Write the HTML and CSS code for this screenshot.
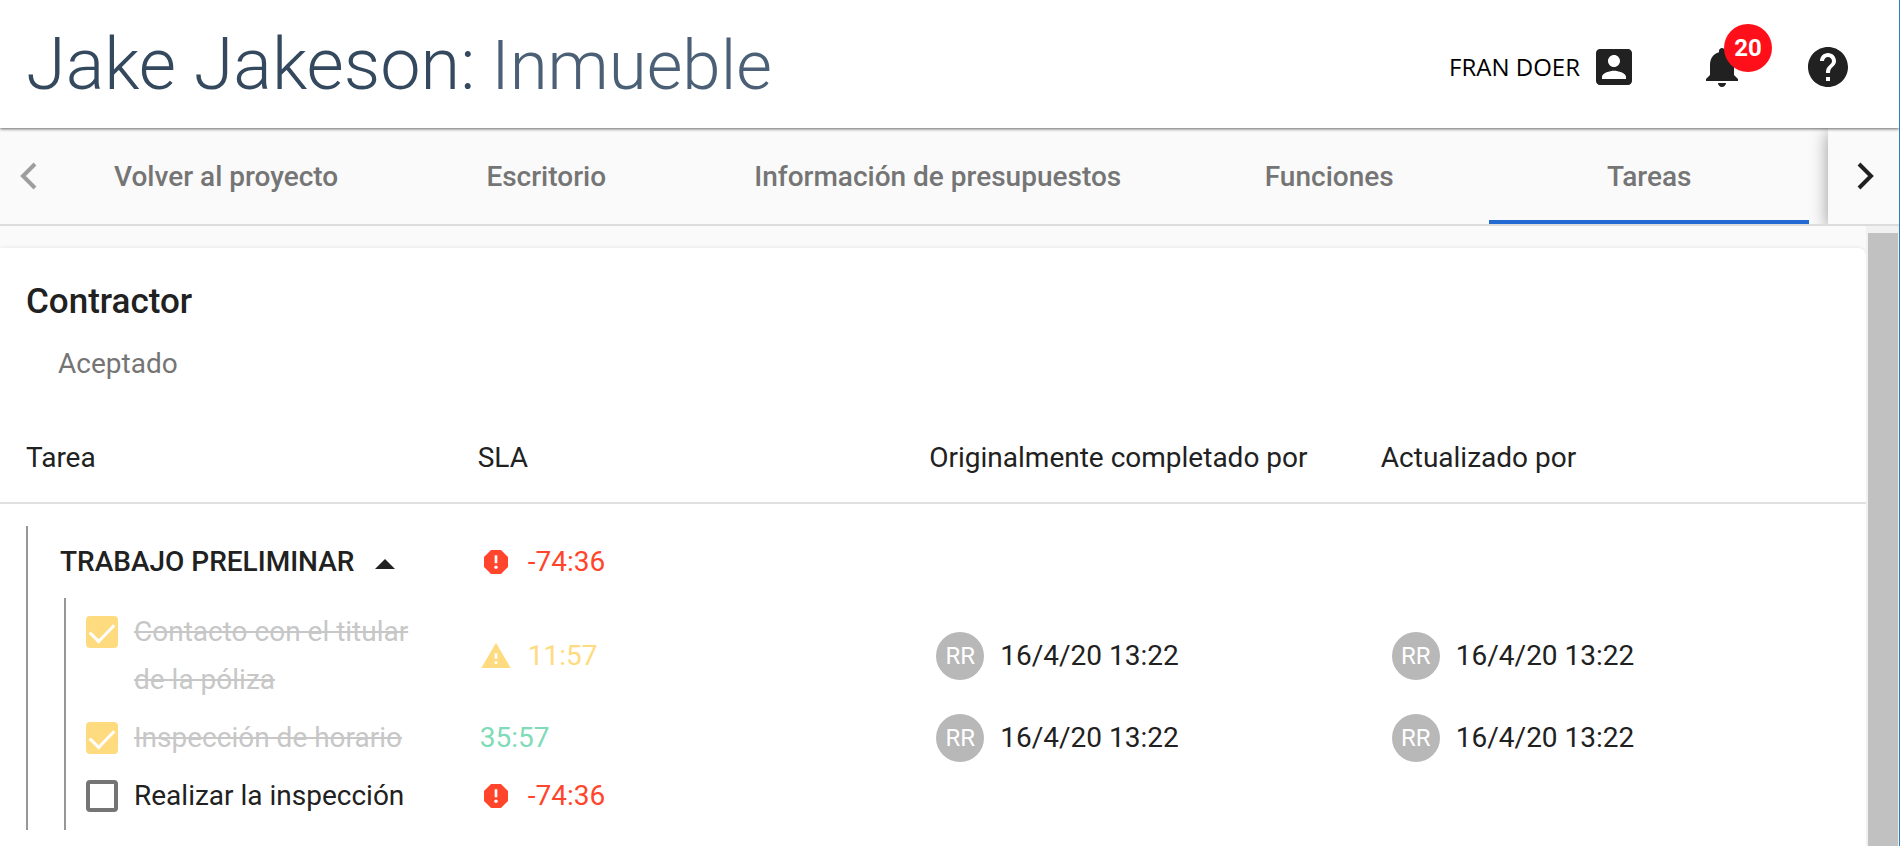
FILE: index.html
```
<!DOCTYPE html>
<html lang="es">
<head>
  <meta charset="UTF-8">
  <title>Jake Jakeson: Inmueble</title>
  <link rel="stylesheet" href="styles.css">
</head>
<body>
  <header class="top-bar">
    <h1>Jake Jakeson: <span>Inmueble</span></h1>
    <div class="top-actions">
      <button class="user-btn">
        FRAN DOER
        <svg class="icon-lg" viewBox="0 0 24 24"><path d="M3 5v14c0 1.1.89 2 2 2h14c1.1 0 2-.9 2-2V5c0-1.1-.9-2-2-2H5c-1.11 0-2 .9-2 2zm12 4c0 1.66-1.34 3-3 3s-3-1.34-3-3 1.34-3 3-3 3 1.34 3 3zm-9 8c0-2 4-3.1 6-3.1s6 1.1 6 3.1v1H6v-1z"/></svg>
      </button>
      <button class="bell-btn" aria-label="Notificaciones">
        <svg class="icon-lg" viewBox="0 0 24 24"><path d="M12 22c1.1 0 2-.9 2-2h-4c0 1.1.89 2 2 2zm6-6v-5c0-3.07-1.64-5.64-4.5-6.32V4c0-.83-.67-1.5-1.5-1.5s-1.5.67-1.5 1.5v.68C7.63 5.36 6 7.92 6 11v5l-2 2v1h16v-1l-2-2z"/></svg>
        <span class="badge">20</span>
      </button>
      <button aria-label="Ayuda">
        <svg class="icon-lg" viewBox="0 0 24 24"><path d="M12 2C6.48 2 2 6.48 2 12s4.48 10 10 10 10-4.48 10-10S17.52 2 12 2zm1 17h-2v-2h2v2zm2.07-7.75l-.9.92C13.45 12.9 13 13.5 13 15h-2v-.5c0-1.1.45-2.1 1.17-2.83l1.24-1.26c.37-.36.59-.86.59-1.41 0-1.1-.9-2-2-2s-2 .9-2 2H8c0-2.21 1.79-4 4-4s4 1.79 4 4c0 .88-.36 1.68-.93 2.25z"/></svg>
      </button>
    </div>
  </header>

  <nav class="tabs">
    <button class="tab-arrow prev" aria-label="Anterior">
      <svg viewBox="0 0 18 28"><path d="M16 2 4 14l12 12"/></svg>
    </button>
    <div class="tab-list">
      <a href="#">Volver al proyecto</a>
      <a href="#">Escritorio</a>
      <a href="#">Información de presupuestos</a>
      <a href="#">Funciones</a>
      <a href="#" class="active">Tareas</a>
    </div>
    <button class="tab-arrow next" aria-label="Siguiente">
      <svg viewBox="0 0 18 28"><path d="m2 2 12 12L2 26"/></svg>
    </button>
  </nav>

  <div class="content">
    <main class="card">
      <h2>Contractor</h2>
      <p class="status">Aceptado</p>
      <table>
        <thead>
          <tr>
            <th>Tarea</th>
            <th>SLA</th>
            <th>Originalmente completado por</th>
            <th>Actualizado por</th>
          </tr>
        </thead>
        <tbody>
          <tr class="group">
            <td><button class="group-btn">TRABAJO PRELIMINAR <i class="caret"></i></button></td>
            <td>
              <div class="sla late">
                <svg viewBox="0 0 24 24"><path d="M15.73 3H8.27L3 8.27v7.46L8.27 21h7.46L21 15.73V8.27L15.73 3zM12 17.3c-.72 0-1.3-.58-1.3-1.3s.58-1.3 1.3-1.3 1.3.58 1.3 1.3-.58 1.3-1.3 1.3zm1-4.3h-2V7h2v6z"/></svg>
                -74:36
              </div>
            </td>
            <td></td>
            <td></td>
          </tr>
          <tr class="task done">
            <td>
              <label><input type="checkbox" checked><span>Contacto con el titular de la póliza</span></label>
            </td>
            <td>
              <div class="sla warn">
                <svg viewBox="0 0 24 24"><path d="M1 21h22L12 2 1 21zm12-3h-2v-2h2v2zm0-4h-2v-4h2v4z"/></svg>
                11:57
              </div>
            </td>
            <td><div class="by"><span class="avatar">RR</span>16/4/20 13:22</div></td>
            <td><div class="by"><span class="avatar">RR</span>16/4/20 13:22</div></td>
          </tr>
          <tr class="task done">
            <td>
              <label><input type="checkbox" checked><span>Inspección de horario</span></label>
            </td>
            <td><div class="sla ok">35:57</div></td>
            <td><div class="by"><span class="avatar">RR</span>16/4/20 13:22</div></td>
            <td><div class="by"><span class="avatar">RR</span>16/4/20 13:22</div></td>
          </tr>
          <tr class="task">
            <td>
              <label><input type="checkbox"><span>Realizar la inspección</span></label>
            </td>
            <td>
              <div class="sla late">
                <svg viewBox="0 0 24 24"><path d="M15.73 3H8.27L3 8.27v7.46L8.27 21h7.46L21 15.73V8.27L15.73 3zM12 17.3c-.72 0-1.3-.58-1.3-1.3s.58-1.3 1.3-1.3 1.3.58 1.3 1.3-.58 1.3-1.3 1.3zm1-4.3h-2V7h2v6z"/></svg>
                -74:36
              </div>
            </td>
            <td></td>
            <td></td>
          </tr>
        </tbody>
      </table>
    </main>
    <div class="scrollbar"><div class="thumb"></div></div>
  </div>
</body>
</html>
```
FILE: styles.css
```
* {
  box-sizing: border-box;
}
body {
  margin: 0;
  min-height: 100vh;
  display: flex;
  flex-direction: column;
  font-family: Roboto, "Liberation Sans", sans-serif;
  font-size: 28px;
  line-height: 48px;
  color: #212121;
  background: #fafafa;
  border-right: 1px solid #2a7fc1;
}
button {
  font: inherit;
  color: inherit;
  background: none;
  border: none;
  padding: 0;
  cursor: pointer;
}
svg {
  display: block;
  fill: currentColor;
}

/* Header */
.top-bar {
  display: flex;
  justify-content: space-between;
  align-items: center;
  height: 128px;
  padding: 0 47px 0 26px;
  background: #fff;
  box-shadow: 0 1px 3px rgba(0, 0, 0, 0.6);
  position: relative;
  z-index: 2;
}
h1 {
  display: flex;
  align-items: baseline;
  gap: 16px;
  margin: 0;
  padding-top: 2px;
  font-size: 72px;
  line-height: 84px;
  font-weight: 300;
  color: #34495e;
}
h1 span {
  font-size: 69px;
  color: #4b6076;
}
.top-actions {
  display: flex;
  align-items: center;
  gap: 58px;
  padding-top: 6px;
}
.icon-lg {
  width: 48px;
  height: 48px;
}
.user-btn {
  display: flex;
  align-items: center;
  gap: 10px;
  margin-right: 2px;
  font-family: "Open Sans", sans-serif;
  font-size: 24px;
  color: #000;
}
.user-btn svg {
  color: #212121;
}
.bell-btn {
  position: relative;
}
.badge {
  position: absolute;
  top: -19px;
  left: 26px;
  width: 48px;
  height: 48px;
  border-radius: 50%;
  background: #ff0f19;
  color: #fff;
  font-size: 24px;
  font-weight: 700;
  text-align: center;
}

/* Tabs */
.tabs {
  display: flex;
  height: 98px;
  border-bottom: 2px solid #dcdcdc;
}
.tab-arrow {
  display: flex;
  align-items: center;
  flex: none;
}
.tab-arrow svg {
  width: 18px;
  height: 28px;
  fill: none;
  stroke: currentColor;
  stroke-width: 4;
}
.prev {
  width: 66px;
  padding-left: 19px;
  color: #9e9e9e;
}
.next {
  width: 71px;
  padding-left: 29px;
  background: #fafafa;
  box-shadow: 0 4px 16px rgba(0, 0, 0, 0.4);
  clip-path: inset(0 0 0 -24px);
}
.tab-list {
  display: flex;
  flex: 1;
  overflow: hidden;
}
.tab-list a {
  flex: none;
  min-width: 320px;
  padding: 2px 48px 0;
  line-height: 94px;
  font-weight: 500;
  text-align: center;
  text-decoration: none;
  color: #757575;
}
.tab-list a.active {
  box-shadow: inset 0 -4px #236bd2;
}

/* Task card */
.content {
  display: flex;
  flex: 1;
}
.card {
  flex: 1;
  margin-top: 22px;
  padding-top: 30px;
  background: #fff;
  border-radius: 0 8px 0 0;
  box-shadow: 0 0 4px rgba(0, 0, 0, 0.1);
}
h2 {
  margin: 0 26px;
  font-size: 35px;
  line-height: 48px;
  font-weight: 500;
}
.status {
  margin: 14px 58px 30px;
  color: #757575;
}
table {
  width: 100%;
  table-layout: fixed;
  border-spacing: 0;
}
th {
  width: 24.2%;
  height: 86px;
  padding: 0 0 4px;
  border-bottom: 2px solid #e0e0e0;
  font-weight: 400;
  text-align: left;
}
th:first-child {
  width: 25.6%;
  padding-left: 26px;
}
th:last-child {
  width: auto;
}
tbody::before {
  content: "";
  display: block;
  height: 22px;
}
td {
  padding: 5px 0;
}
td:nth-child(2) {
  padding-left: 2px;
}
td:nth-child(3) {
  padding-left: 7px;
}
td:nth-child(4) {
  padding-left: 11px;
}

/* tree lines on the left of the tasks */
td:first-child {
  padding-left: 60px;
  background: linear-gradient(#979797, #979797) 26px 0 / 2px 100% no-repeat;
}
.task td:first-child {
  padding-left: 86px;
  padding-right: 56px;
  background:
    linear-gradient(#979797, #979797) 26px 0 / 2px 100% no-repeat,
    linear-gradient(#979797, #979797) 64px 0 / 2px 100% no-repeat;
}
.group td {
  height: 72px;
}
.group + .task td {
  padding-top: 10px;
}
.task:last-child td {
  padding-bottom: 10px;
}
.group-btn {
  display: flex;
  align-items: center;
  gap: 21px;
  font-weight: 500;
}
.caret {
  border: 10px solid transparent;
  border-top: 0;
  border-bottom-color: #212121;
  margin-top: 4px;
}
label {
  display: flex;
  gap: 16px;
}
input[type="checkbox"] {
  appearance: none;
  flex: none;
  display: flex;
  justify-content: center;
  width: 32px;
  height: 32px;
  margin: 8px 0;
  border: 4px solid #757575;
  border-radius: 4px;
}
input[type="checkbox"]:checked {
  border-color: #ffdb80;
  background: #ffdb80;
}
input[type="checkbox"]:checked::before {
  content: "";
  width: 11px;
  height: 21px;
  margin-top: -2px;
  border: solid #fff;
  border-width: 0 3px 3px 0;
  transform: rotate(44deg);
}
.done label {
  color: #c7c7c7;
  text-decoration: line-through;
}
.sla, .by {
  display: flex;
  align-items: center;
  gap: 16px;
}
.sla svg {
  width: 32px;
  height: 32px;
}
.late { color: #ff452b; }
.warn { color: #ffdb80; }
.ok { color: #80dbb8; }
.avatar {
  width: 48px;
  height: 48px;
  border-radius: 50%;
  background: #b8b8b8;
  color: #fff;
  font-size: 24px;
  text-align: center;
}

/* Scrollbar */
.scrollbar {
  display: flex;
  width: 33px;
  padding: 7px 1px 0 2px;
  background: #f1f1f1;
}
.thumb {
  flex: 1;
  background: #c1c1c1;
}
```
